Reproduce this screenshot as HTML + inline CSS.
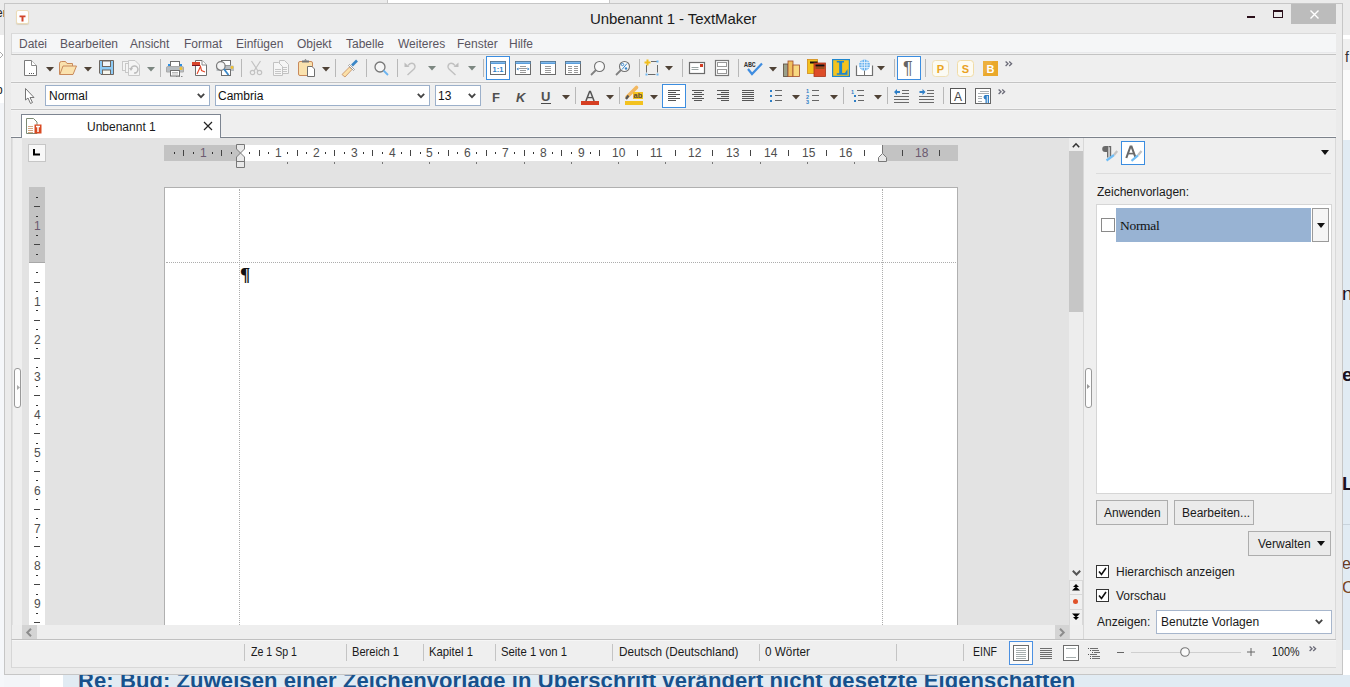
<!DOCTYPE html><html><head><meta charset="utf-8"><style>
*{margin:0;padding:0;box-sizing:border-box}
html,body{width:1350px;height:687px;overflow:hidden;background:#fff;position:relative;font-family:"Liberation Sans",sans-serif;font-size:12px;color:#1e1e1e}
div,svg{position:absolute}
svg{overflow:visible}
.t{white-space:nowrap;line-height:1}
</style></head><body><div style="left:0px;top:0px;width:1350px;height:687px;background:#f3f5f8"></div>
<div style="left:0px;top:0px;width:1350px;height:35px;background:#ebebeb"></div>
<div style="left:387px;top:0px;width:223px;height:3px;background:#fff;border-left:1px solid #c8c8c8;border-right:1px solid #c8c8c8"></div>
<div style="left:1343px;top:35px;width:7px;height:4px;background:#fff"></div>
<div style="left:1343px;top:39px;width:7px;height:31px;background:#f0f0f0"></div>
<div class="t" style="left:1345px;top:50px;font-size:14px;color:#333">f</div>
<div style="left:1343px;top:70px;width:7px;height:70px;background:#fbfbfb"></div>
<div style="left:1343px;top:140px;width:7px;height:510px;background:#e1ebf3"></div>
<div class="t" style="left:1342px;top:284px;color:#1a1020;font-size:19px">n</div>
<div class="t" style="left:1342px;top:365px;color:#1a1020;font-size:19px;font-weight:bold">e</div>
<div class="t" style="left:1342px;top:474px;color:#1a1020;font-size:19px;font-weight:bold">L</div>
<div class="t" style="left:1342px;top:556px;color:#6a3a20;font-size:16px">e</div>
<div class="t" style="left:1342px;top:579px;color:#7a4420;font-size:17px">C</div>
<div style="left:1343px;top:524px;width:7px;height:1px;background:#c9d3dc"></div>
<div style="left:1343px;top:650px;width:7px;height:37px;background:#fff"></div>
<div style="left:0px;top:35px;width:4px;height:68px;background:#fff"></div>
<div class="t" style="left:-4px;top:7px;font-size:12px;color:#222">er</div>
<svg style="left:0px;top:52px;" width="4" height="6" viewBox="0 0 4 6"><path d="M0 0L3 3L0 6" fill="none" stroke="#aaa"/></svg>
<div class="t" style="left:-4px;top:84px;font-size:12px;color:#222">p</div>
<div style="left:0px;top:110px;width:4px;height:577px;background:#f5f7fa"></div>
<div style="left:40px;top:674px;width:23px;height:13px;background:#fff"></div>
<div style="left:63px;top:675px;width:1287px;height:12px;background:#e1ebf3"></div>
<div class="t" style="left:78px;top:670px;font-size:22px;font-weight:bold;color:#17518c;letter-spacing:0.09px">Re: Bug: Zuweisen einer Zeichenvorlage in Überschrift verändert nicht gesetzte Eigenschaften</div>
<div style="left:4px;top:3px;width:1339px;height:672px;background:#ebebeb;border:1px solid #c6c6c6"></div>
<div class="t" style="left:590px;top:11px;font-size:15px;color:#1a1a1a;letter-spacing:-0.08px">Unbenannt 1 - TextMaker</div>
<div style="left:16px;top:10px;width:13px;height:14px;background:#fefefe;border:1px solid #ecdcb8;border-radius:2px;box-shadow:0 1px 1px #d8d0c0"></div>
<svg style="left:19px;top:15px;" width="7" height="7" viewBox="0 0 7 7"><path d="M0.5 0.5H6.5V2.3H4.5V6.5H2.5V2.3H0.5Z" fill="#d2452a"/></svg>
<div style="left:1247px;top:16px;width:8px;height:2px;background:#2a0f1a"></div>
<div style="left:1273px;top:10px;width:10px;height:8px;border:1px solid #2a0f1a;border-top-width:2px"></div>
<div style="left:1291px;top:4px;width:45px;height:20px;background:#bcbcbc"></div>
<svg style="left:1310px;top:10px;" width="9" height="9" viewBox="0 0 9 9"><path d="M0.5 0.5L8.5 8.5M8.5 0.5L0.5 8.5" stroke="#fff" stroke-width="1.4"/></svg>
<div style="left:11px;top:33px;width:1325px;height:22px;background:#f5f6f7;border-top:1px solid #dadada;border-left:1px solid #d8d8d8;border-bottom:1px solid #c3c3c3"></div>
<div style="left:12px;top:52px;width:1324px;height:1px;background:#e8e9eb"></div>
<div style="left:12px;top:53px;width:1324px;height:1px;background:#f1f1f1"></div>
<div class="t" style="left:19px;top:38px;font-size:12px;color:#5a5560">Datei</div>
<div class="t" style="left:60px;top:38px;font-size:12px;color:#5a5560">Bearbeiten</div>
<div class="t" style="left:130px;top:38px;font-size:12px;color:#5a5560">Ansicht</div>
<div class="t" style="left:184px;top:38px;font-size:12px;color:#5a5560">Format</div>
<div class="t" style="left:236px;top:38px;font-size:12px;color:#5a5560">Einfügen</div>
<div class="t" style="left:297px;top:38px;font-size:12px;color:#5a5560">Objekt</div>
<div class="t" style="left:346px;top:38px;font-size:12px;color:#5a5560">Tabelle</div>
<div class="t" style="left:398px;top:38px;font-size:12px;color:#5a5560">Weiteres</div>
<div class="t" style="left:457px;top:38px;font-size:12px;color:#5a5560">Fenster</div>
<div class="t" style="left:509px;top:38px;font-size:12px;color:#5a5560">Hilfe</div>
<div style="left:11px;top:55px;width:1325px;height:28px;background:#efefef;border-bottom:1px solid #c4c4c4"></div>
<div style="left:11px;top:81px;width:1325px;height:1px;background:#f3f3f3"></div>
<div style="left:11px;top:83px;width:1325px;height:1px;background:#f3f3f3"></div>
<svg style="left:24px;top:60px;" width="13" height="16" viewBox="0 0 13 16"><path d="M0.5 0.5H7.5L12.5 5.5V15.5H0.5Z" fill="#fff" stroke="#7a7a7a"/><path d="M7.5 0.5V5.5H12.5" fill="#fff" stroke="#8a8a8a"/><path d="M5 13.5h1M7 13.5h1M9 13.5h1" stroke="#555" stroke-width="1"/></svg>
<svg style="left:46px;top:67px;" width="8" height="5" viewBox="0 0 8 5"><path d="M0 0H8L4 4.5Z" fill="#4f4236"/></svg>
<svg style="left:59px;top:61px;" width="18" height="14" viewBox="0 0 18 14"><path d="M0.5 13V2.5Q0.5 0.5 2.5 0.5H6.5L8 2.5H13.5V5" fill="#fae2ae" stroke="#c98a5c"/><path d="M0.5 2.5V13.5H14L17.5 5H4L1 13" fill="#fae2ae" stroke="#c98a5c"/></svg>
<svg style="left:84px;top:67px;" width="8" height="5" viewBox="0 0 8 5"><path d="M0 0H8L4 4.5Z" fill="#4f4236"/></svg>
<svg style="left:99px;top:60px;" width="15" height="15" viewBox="0 0 15 15"><path d="M0.5 0.5H14.5V14.5H2L0.5 13Z" fill="#8ecbf6" stroke="#6e6660"/><rect x="3.5" y="1" width="8" height="5.5" fill="#f4f6f8" stroke="#6e6660"/><rect x="3.5" y="10" width="8" height="4.5" fill="#f6f6ee" stroke="#6e6660"/></svg>
<svg style="left:122px;top:60px;" width="18" height="16" viewBox="0 0 18 16"><g fill="#f4f4f4" stroke="#c8c8c8"><rect x="0.5" y="1.5" width="7" height="9"/><rect x="3.5" y="3.5" width="7" height="9"/><path d="M6.5 0.5H13L17.5 5V15.5H6.5Z"/></g><path d="M9 9a3.5 3.5 0 1 1 3 4" fill="none" stroke="#bbb" stroke-width="1.5"/><path d="M7 8h4l-2 3z" fill="#bbb"/></svg>
<svg style="left:147px;top:67px;" width="8" height="5" viewBox="0 0 8 5"><path d="M0 0H8L4 4.5Z" fill="#7b8680"/></svg>
<div style="left:160px;top:59px;width:1px;height:18px;background:#b8b8b8"></div>
<svg style="left:166px;top:61px;" width="18" height="16" viewBox="0 0 18 16"><rect x="4.5" y="0.5" width="9" height="5" fill="#fff" stroke="#6f6f6f"/><rect x="2" y="3" width="2" height="2" fill="#2f8fe0"/><rect x="14" y="3" width="2" height="2" fill="#2f8fe0"/><path d="M1.5 5.5H16.5Q17.5 5.5 17.5 7V11H0.5V7Q0.5 5.5 1.5 5.5Z" fill="#b8bdc1" stroke="#aaa"/><rect x="4.5" y="9.5" width="9" height="5.5" fill="#fff" stroke="#6f6f6f"/><path d="M6 11.5h6M6 13h6" stroke="#bbb"/><circle cx="15" cy="7.5" r="1.5" fill="#f2c22e"/><path d="M10 15.5h1.5M12.5 15.5h1.5M15 15.5h1.5" stroke="#888" stroke-width="1"/></svg>
<svg style="left:192px;top:60px;" width="15" height="16" viewBox="0 0 15 16"><path d="M3.5 0.5H10L14.5 5V15.5H3.5Z" fill="#fff" stroke="#6f6f6f"/><path d="M10 0.5V5H14.5" fill="#fff" stroke="#888"/><rect x="0" y="2" width="8" height="4" fill="#d8452b"/><rect x="0" y="5" width="8" height="1" fill="#7a1420"/><path d="M5 14L8.5 6.5L9.5 10.5L13 12" fill="none" stroke="#e2482a" stroke-width="1.1"/></svg>
<svg style="left:216px;top:60px;" width="19" height="17" viewBox="0 0 19 17"><rect x="5.5" y="0.5" width="9" height="5" fill="#fff" stroke="#6f6f6f"/><path d="M1.5 5.5H17Q18 5.5 18 7V11H0.5V7Z" fill="#b8bdc1"/><rect x="5.5" y="9.5" width="9" height="6" fill="#fff" stroke="#6f6f6f"/><circle cx="16" cy="7.5" r="1.4" fill="#f2c22e"/><circle cx="4.8" cy="6" r="4.3" fill="#f4f4f4" stroke="#7a7a7a" stroke-width="1.2"/><path d="M8 9L12.5 15" stroke="#3a88c8" stroke-width="1.8"/></svg>
<div style="left:241px;top:59px;width:1px;height:18px;background:#b8b8b8"></div>
<svg style="left:249px;top:60px;" width="14" height="16" viewBox="0 0 14 16"><g fill="none" stroke="#c2c2c2" stroke-width="1.2"><path d="M2.5 1L9 11M11.5 1L5 11"/><circle cx="3.5" cy="12.5" r="2.2"/><circle cx="10.5" cy="12.5" r="2.2"/></g></svg>
<svg style="left:273px;top:60px;" width="16" height="16" viewBox="0 0 16 16"><g fill="#f6f6f6" stroke="#c2c2c2"><path d="M6.5 0.5H11.5L15.5 4.5V13.5H6.5Z"/><path d="M0.5 2.5H5.5L9.5 6.5V15.5H0.5Z"/></g><path d="M2 9.5h6M2 11.5h6M2 13.5h6M10 7.5h4M10 9.5h4M10 11.5h4" stroke="#c6c6c6"/></svg>
<svg style="left:298px;top:59px;" width="18" height="18" viewBox="0 0 18 18"><rect x="0.5" y="2.5" width="14" height="14" rx="1.5" fill="#fae2ae" stroke="#c98a5c"/><rect x="4" y="1.5" width="7" height="2" fill="#777"/><path d="M7.5 0L9 1.5H6Z" fill="#777"/><path d="M9.5 7.5H14L16.5 10V17.5H9.5Z" fill="#fff" stroke="#6f6f6f"/></svg>
<svg style="left:322px;top:67px;" width="8" height="5" viewBox="0 0 8 5"><path d="M0 0H8L4 4.5Z" fill="#4f4236"/></svg>
<div style="left:335px;top:59px;width:1px;height:18px;background:#b8b8b8"></div>
<svg style="left:341px;top:60px;" width="17" height="17" viewBox="0 0 17 17"><path d="M8.5 7L1 14.5L4 17L11 9.5Z" fill="#fbe0a8" stroke="#c48a60" stroke-width="0.8"/><path d="M7.5 5.5L12.5 10.5L13.5 9.5L8.5 4.5Z" fill="#fff" stroke="#8a8a8a" stroke-width="0.8"/><path d="M11 5.5L16 0.5" stroke="#3a86c6" stroke-width="2.6"/></svg>
<div style="left:366px;top:59px;width:1px;height:18px;background:#b8b8b8"></div>
<svg style="left:374px;top:61px;" width="15" height="15" viewBox="0 0 15 15"><circle cx="6" cy="6" r="5" fill="#f6f6f6" stroke="#777" stroke-width="1.3"/><path d="M9.5 9.5L14 14" stroke="#6cb4f0" stroke-width="1.8"/></svg>
<div style="left:397px;top:59px;width:1px;height:18px;background:#b8b8b8"></div>
<svg style="left:404px;top:60px;" width="14" height="16" viewBox="0 0 14 16"><path d="M4 5.5Q7 2 10 4Q12 6.5 10 9L3.5 15" fill="none" stroke="#c0c0c0" stroke-width="1.4"/><path d="M0.5 2.5V7H5.5Z" fill="#bdbdbd"/></svg>
<svg style="left:428px;top:66px;" width="8" height="5" viewBox="0 0 8 5"><path d="M0 0H8L4 4.5Z" fill="#7b8680"/></svg>
<svg style="left:445px;top:60px;" width="14" height="16" viewBox="0 0 14 16"><path d="M10 5.5Q7 2 4 4Q2 6.5 4 9L10.5 15" fill="none" stroke="#c0c0c0" stroke-width="1.4"/><path d="M13.5 2.5V7H8.5Z" fill="#bdbdbd"/></svg>
<svg style="left:468px;top:66px;" width="8" height="5" viewBox="0 0 8 5"><path d="M0 0H8L4 4.5Z" fill="#7b8680"/></svg>
<div style="left:483px;top:59px;width:1px;height:18px;background:#b8b8b8"></div>
<div style="left:486px;top:56px;width:24px;height:24px;background:#fff;border:1px solid #3b8de0"></div>
<svg style="left:490px;top:61px;" width="16" height="14" viewBox="0 0 16 14"><rect x="0.5" y="0.5" width="15" height="13" fill="#fff" stroke="#6b6b6b"/><rect x="0.5" y="0.5" width="15" height="2.5" fill="#4d95d6"/><path d="M1 1.7H15" stroke="#9fcdf5" stroke-width="0.8"/><text x="8" y="11.2" font-size="7.5" font-weight="bold" text-anchor="middle" fill="#2f7fc6" font-family="Liberation Sans">1:1</text></svg>
<svg style="left:515px;top:61px;" width="16" height="14" viewBox="0 0 16 14"><rect x="0.5" y="0.5" width="15" height="13" fill="#fff" stroke="#6b6b6b"/><rect x="0.5" y="0.5" width="15" height="2.5" fill="#4d95d6"/><path d="M1 1.7H15" stroke="#9fcdf5" stroke-width="0.8"/><path d="M5 5.5h6M4 7.5h8M5 9.5h6M5 11.5h6" stroke="#999"/><path d="M1.5 8L3.5 6.5V9.5Z M14.5 8L12.5 6.5V9.5Z" fill="#2f7fc6"/></svg>
<svg style="left:540px;top:61px;" width="16" height="14" viewBox="0 0 16 14"><rect x="0.5" y="0.5" width="15" height="13" fill="#fff" stroke="#6b6b6b"/><rect x="0.5" y="0.5" width="15" height="2.5" fill="#4d95d6"/><path d="M1 1.7H15" stroke="#9fcdf5" stroke-width="0.8"/><path d="M5 5.5h6M5 7.5h6M5 9.5h6M5 11.5h6" stroke="#999"/></svg>
<svg style="left:565px;top:61px;" width="16" height="14" viewBox="0 0 16 14"><rect x="0.5" y="0.5" width="15" height="13" fill="#fff" stroke="#6b6b6b"/><rect x="0.5" y="0.5" width="15" height="2.5" fill="#4d95d6"/><path d="M1 1.7H15" stroke="#9fcdf5" stroke-width="0.8"/><path d="M3 5.5h4M9 5.5h4M3 7.5h4M9 7.5h4M3 9.5h4M9 9.5h4M3 11.5h4M9 11.5h4" stroke="#999"/></svg>
<svg style="left:590px;top:61px;" width="15" height="15" viewBox="0 0 15 15"><circle cx="9.5" cy="5.5" r="5" fill="#f8f8f8" stroke="#707070" stroke-width="1.1"/><path d="M6 9L1 14" stroke="#808080" stroke-width="1.8"/></svg>
<svg style="left:615px;top:61px;" width="15" height="15" viewBox="0 0 15 15"><circle cx="9.5" cy="5.5" r="5" fill="#f8f8f8" stroke="#707070" stroke-width="1.1"/><path d="M6 9L1 14" stroke="#808080" stroke-width="1.8"/><path d="M12 2.5L7 8.5" stroke="#3a88cc"/><circle cx="7.5" cy="3.5" r="1.2" fill="none" stroke="#3a88cc"/><circle cx="11" cy="7.5" r="1.2" fill="#3a88cc"/></svg>
<div style="left:639px;top:59px;width:1px;height:18px;background:#b8b8b8"></div>
<svg style="left:644px;top:59px;" width="18" height="18" viewBox="0 0 18 18"><path d="M2.5 6V13.5M4 15.5H11.5M13.5 6V13.5M7 2.5H13" stroke="#6b6b6b" fill="none"/><rect x="1.5" y="14.5" width="2" height="2" fill="#6cb8f4"/><rect x="12.5" y="14.5" width="2" height="2" fill="#6cb8f4"/><rect x="12.5" y="1.5" width="2" height="2" fill="#6cb8f4"/><path d="M3.5 0.5V6.5M0.5 3.5H6.5" stroke="#f1be1c" stroke-width="2"/></svg>
<svg style="left:665px;top:66px;" width="8" height="5" viewBox="0 0 8 5"><path d="M0 0H8L4 4.5Z" fill="#4f4236"/></svg>
<div style="left:682px;top:59px;width:1px;height:18px;background:#b8b8b8"></div>
<svg style="left:689px;top:62px;" width="16" height="12" viewBox="0 0 16 12"><rect x="0.5" y="0.5" width="15" height="11" fill="#fff" stroke="#6b6b6b" stroke-width="1.2"/><rect x="11" y="2" width="3" height="3" fill="#d23b22"/><path d="M2.5 5.5h7M2.5 7.5h7" stroke="#9aa4a4"/></svg>
<svg style="left:715px;top:60px;" width="14" height="16" viewBox="0 0 14 16"><rect x="0.5" y="0.5" width="13" height="15" fill="#fff" stroke="#777" stroke-width="1.2"/><rect x="2.5" y="2.5" width="9" height="4" fill="none" stroke="#999"/><rect x="2.5" y="9.5" width="9" height="4" fill="none" stroke="#999"/></svg>
<div style="left:738px;top:59px;width:1px;height:18px;background:#b8b8b8"></div>
<svg style="left:744px;top:60px;" width="19" height="16" viewBox="0 0 19 16"><text x="0" y="7" font-size="6.5" font-weight="bold" fill="#333" font-family="Liberation Mono">ABC</text><path d="M4 9L8 14L18 3.5" fill="none" stroke="#3f8de0" stroke-width="2.2"/></svg>
<svg style="left:769px;top:67px;" width="8" height="5" viewBox="0 0 8 5"><path d="M0 0H8L4 4.5Z" fill="#4f4236"/></svg>
<svg style="left:783px;top:60px;" width="17" height="17" viewBox="0 0 17 17"><rect x="0.5" y="4" width="4.5" height="12.5" fill="#9aa08a" stroke="#5a4a3a" stroke-width="0.8"/><rect x="5" y="1" width="5" height="15.5" fill="#f0c060" stroke="#a04a2a" stroke-width="0.8"/><rect x="10" y="5" width="6.5" height="11.5" fill="#f8d880" stroke="#a04a2a" stroke-width="0.8"/></svg>
<svg style="left:807px;top:59px;" width="19" height="18" viewBox="0 0 19 18"><rect x="0.5" y="0.5" width="10" height="14" fill="#f3c21f" stroke="#d38a1a" stroke-width="0.8"/><rect x="3" y="2.5" width="7.5" height="2" fill="#111"/><rect x="7" y="4" width="11.5" height="13.5" fill="#dd4c28" stroke="#a83418" stroke-width="0.8"/><rect x="8.5" y="5.5" width="9" height="2" fill="#111"/><rect x="8.5" y="8.5" width="9" height="1" fill="#551"/></svg>
<svg style="left:832px;top:59px;" width="18" height="18" viewBox="0 0 18 18"><rect x="0.6" y="0.6" width="16.8" height="16.8" fill="#f3c31e" stroke="#1e86cd" stroke-width="1.2"/><path d="M4.8 2H12V3.4H10.1V14H13L15.5 10V15.7H4.8V14.3H7.2V3.4H4.8Z" fill="#1e86cd"/></svg>
<svg style="left:856px;top:59px;" width="17" height="18" viewBox="0 0 17 18"><path d="M0.5 6.5V16.5H16.5V6.5" fill="#fff" stroke="#707070" stroke-width="1.2"/><path d="M8.5 10V16.5" stroke="#707070"/><circle cx="8.5" cy="6" r="5.5" fill="#6ab2ee"/><path d="M3 3.5h11M3 6h11M3 8.5h11M6 0.5v11M8.5 0.5v11M11 0.5v11" stroke="#eaf4fc" stroke-width="0.8"/></svg>
<svg style="left:877px;top:66px;" width="8" height="5" viewBox="0 0 8 5"><path d="M0 0H8L4 4.5Z" fill="#4f4236"/></svg>
<div style="left:894px;top:59px;width:1px;height:18px;background:#b8b8b8"></div>
<div style="left:897px;top:56px;width:24px;height:24px;background:#fff;border:1px solid #3b8de0"></div>
<div class="t" style="left:903px;top:59px;font-size:18px;color:#666">¶</div>
<div style="left:925px;top:59px;width:1px;height:18px;background:#b8b8b8"></div>
<svg style="left:932px;top:60px;" width="17" height="17" viewBox="0 0 17 17"><rect x="0.5" y="0.5" width="16" height="16" rx="3" fill="#fbfbf4" stroke="#efe0b8"/><text x="8.5" y="12.5" font-size="11" font-weight="bold" text-anchor="middle" fill="#eaa420" font-family="Liberation Sans">P</text></svg>
<svg style="left:957px;top:60px;" width="17" height="17" viewBox="0 0 17 17"><rect x="0.5" y="0.5" width="16" height="16" rx="3" fill="#fdfbf2" stroke="#f1dca6"/><text x="8.5" y="12.5" font-size="11" font-weight="bold" text-anchor="middle" fill="#e9a11f" font-family="Liberation Sans">S</text></svg>
<svg style="left:983px;top:61px;" width="15" height="15" viewBox="0 0 15 15"><rect x="0" y="0" width="15" height="15" fill="#eaa82a"/><path d="M0 0H10L0 15Z" fill="#f0b850" opacity="0.5"/><text x="7.5" y="11.5" font-size="11" font-weight="bold" text-anchor="middle" fill="#fff" font-family="Liberation Sans">B</text></svg>
<svg style="left:1005px;top:61px;" width="8" height="6" viewBox="0 0 8 6"><path d="M0.6 0.6L3 2.8L0.6 5M4.2 0.6L6.6 2.8L4.2 5" fill="none" stroke="#6b6b78" stroke-width="1.3"/></svg>
<div style="left:11px;top:84px;width:1325px;height:26px;background:#efefef;border-bottom:1px solid #c4c4c4"></div>
<div style="left:11px;top:108px;width:1325px;height:1px;background:#f3f3f3"></div>
<div style="left:11px;top:110px;width:1325px;height:1px;background:#f3f3f3"></div>
<svg style="left:25px;top:88px;" width="10" height="16" viewBox="0 0 10 16"><path d="M0.5 0.5V12L3 10L5.5 15.5L7.5 14.5L5 9.5H9Z" fill="#fff" stroke="#767676"/></svg>
<div style="left:45px;top:85px;width:165px;height:21px;background:#fff;border:1px solid #9cb0ca"></div>
<div class="t" style="left:49px;top:90px;font-size:12px;color:#111;transform:scaleX(0.9968);transform-origin:0 0">Normal</div>
<svg style="left:197px;top:93px;" width="8" height="6" viewBox="0 0 8 6"><path d="M0.8 0.8L4 4.2L7.2 0.8" fill="none" stroke="#444" stroke-width="1.8"/></svg>
<div style="left:215px;top:85px;width:215px;height:21px;background:#fff;border:1px solid #9cb0ca"></div>
<div class="t" style="left:218px;top:90px;font-size:12px;color:#111">Cambria</div>
<svg style="left:417px;top:93px;" width="8" height="6" viewBox="0 0 8 6"><path d="M0.8 0.8L4 4.2L7.2 0.8" fill="none" stroke="#444" stroke-width="1.8"/></svg>
<div style="left:435px;top:85px;width:46px;height:21px;background:#fff;border:1px solid #9cb0ca"></div>
<div class="t" style="left:438px;top:90px;font-size:12px;color:#111">13</div>
<svg style="left:468px;top:93px;" width="8" height="6" viewBox="0 0 8 6"><path d="M0.8 0.8L4 4.2L7.2 0.8" fill="none" stroke="#444" stroke-width="1.8"/></svg>
<div class="t" style="left:492px;top:91px;font-size:13px;font-weight:bold;color:#505050">F</div>
<div class="t" style="left:516px;top:91px;font-size:13px;font-weight:bold;font-style:italic;color:#505050">K</div>
<div class="t" style="left:541px;top:90px;font-size:13px;font-weight:bold;color:#505050">U</div>
<div style="left:541px;top:103px;width:10px;height:1px;background:#4a4a4a"></div>
<svg style="left:562px;top:95px;" width="8" height="5" viewBox="0 0 8 5"><path d="M0 0H8L4 4.5Z" fill="#4f4236"/></svg>
<div style="left:575px;top:87px;width:1px;height:17px;background:#b8b8b8"></div>
<svg style="left:585px;top:91px;" width="10" height="10" viewBox="0 0 10 10"><path d="M0.9 10L4.6 0.6H5.4L9.1 10" fill="none" stroke="#555" stroke-width="1.5"/><path d="M2.6 6.6H7.4" stroke="#555" stroke-width="1.3"/></svg>
<div style="left:581px;top:101px;width:18px;height:4px;background:#d63f22"></div>
<svg style="left:606px;top:95px;" width="8" height="5" viewBox="0 0 8 5"><path d="M0 0H8L4 4.5Z" fill="#4f4236"/></svg>
<div style="left:619px;top:87px;width:1px;height:17px;background:#b8b8b8"></div>
<svg style="left:625px;top:86px;" width="19" height="20" viewBox="0 0 19 20"><path d="M11.5 1.5L2 11" stroke="#f2b860" stroke-width="3.6" stroke-linecap="round"/><path d="M3.5 9.5L1 13" stroke="#555" stroke-width="2.2"/><rect x="8" y="6" width="10" height="7" fill="#f3c21f"/><text x="8.6" y="12" font-size="7.5" font-weight="bold" fill="#5a4a3a" font-family="Liberation Sans">ab</text><rect x="0" y="15" width="18" height="4" fill="#f3c21f"/></svg>
<svg style="left:650px;top:95px;" width="8" height="5" viewBox="0 0 8 5"><path d="M0 0H8L4 4.5Z" fill="#4f4236"/></svg>
<div style="left:662px;top:84px;width:24px;height:24px;background:#fff;border:1px solid #3b8de0"></div>
<svg style="left:667px;top:89px;" width="16" height="14" viewBox="0 0 16 14"><path d="M1 1.5h12M1 3.5h8M1 5.5h12M1 7.5h8M1 9.5h12M1 11.5h8" stroke="#555" stroke-width="1"/></svg>
<svg style="left:692px;top:89px;" width="16" height="14" viewBox="0 0 16 14"><path d="M0 1.5h12M2 3.5h8M0 5.5h12M2 7.5h8M0 9.5h12M2 11.5h8" stroke="#555" stroke-width="1"/></svg>
<svg style="left:717px;top:89px;" width="16" height="14" viewBox="0 0 16 14"><path d="M0 1.5h12M4 3.5h8M0 5.5h12M4 7.5h8M0 9.5h12M4 11.5h8" stroke="#555" stroke-width="1"/></svg>
<svg style="left:742px;top:89px;" width="16" height="14" viewBox="0 0 16 14"><path d="M0 1.5h12M0 3.5h12M0 5.5h12M0 7.5h12M0 9.5h12M0 11.5h12" stroke="#555" stroke-width="1"/></svg>
<svg style="left:770px;top:89px;" width="13" height="14" viewBox="0 0 13 14"><g fill="#2f7fc6"><rect x="0" y="1" width="2" height="2"/><rect x="0" y="6" width="2" height="2"/><rect x="0" y="11" width="2" height="2"/></g><path d="M5 1.5h7M5 6.5h7M5 11.5h7" stroke="#666"/></svg>
<svg style="left:792px;top:95px;" width="8" height="5" viewBox="0 0 8 5"><path d="M0 0H8L4 4.5Z" fill="#4f4236"/></svg>
<svg style="left:806px;top:88px;" width="14" height="16" viewBox="0 0 14 16"><text x="0" y="5" font-size="5.5" font-weight="bold" fill="#2f7fc6" font-family="Liberation Sans">1</text><text x="0" y="10.5" font-size="5.5" font-weight="bold" fill="#2f7fc6" font-family="Liberation Sans">2</text><text x="0" y="16" font-size="5.5" font-weight="bold" fill="#2f7fc6" font-family="Liberation Sans">3</text><path d="M6 2.5h7M6 7.5h7M6 12.5h7" stroke="#666"/></svg>
<svg style="left:830px;top:95px;" width="8" height="5" viewBox="0 0 8 5"><path d="M0 0H8L4 4.5Z" fill="#4f4236"/></svg>
<div style="left:843px;top:87px;width:1px;height:17px;background:#b8b8b8"></div>
<svg style="left:851px;top:88px;" width="13" height="16" viewBox="0 0 13 16"><text x="0" y="6" font-size="5.5" font-weight="bold" fill="#2f7fc6" font-family="Liberation Sans">1</text><rect x="3" y="7" width="2" height="2" fill="#2f7fc6"/><rect x="3" y="12" width="2" height="2" fill="#2f7fc6"/><path d="M6 2.5h7M7 7.5h6M7 12.5h6" stroke="#666"/></svg>
<svg style="left:874px;top:95px;" width="8" height="5" viewBox="0 0 8 5"><path d="M0 0H8L4 4.5Z" fill="#4f4236"/></svg>
<div style="left:887px;top:87px;width:1px;height:17px;background:#b8b8b8"></div>
<svg style="left:894px;top:89px;" width="16" height="15" viewBox="0 0 16 15"><path d="M8 1.5h7M8 4.5h7M0 7.5h15M0 10.5h15M0 13.5h15" stroke="#6a6a6a"/><path d="M0 3L3 0V2H6V4H3V6Z" fill="#2f7fc6"/></svg>
<svg style="left:919px;top:89px;" width="16" height="15" viewBox="0 0 16 15"><path d="M8 1.5h7M8 4.5h7M0 7.5h15M0 10.5h15M0 13.5h15" stroke="#6a6a6a"/><path d="M6.5 3L3.5 0V2H0.5V4H3.5V6Z" fill="#2f7fc6"/></svg>
<div style="left:943px;top:87px;width:1px;height:17px;background:#b8b8b8"></div>
<svg style="left:950px;top:88px;" width="16" height="16" viewBox="0 0 16 16"><rect x="0.5" y="0.5" width="15" height="15" fill="#fff" stroke="#555"/><text x="8" y="13" font-size="12" text-anchor="middle" fill="#444" font-family="Liberation Sans">A</text></svg>
<svg style="left:975px;top:88px;" width="16" height="16" viewBox="0 0 16 16"><rect x="0.5" y="0.5" width="15" height="15" fill="#fff" stroke="#666"/><path d="M5 3.5h9M3 5.5h11M3 8.5h4M3 10.5h4M3 13.5h4" stroke="#aab0b4"/><path d="M10 7h4v8h-1.3v-7h-0.9v7h-1.3v-3.6a2.3 2.3 0 0 1 -0.5-4.4z" fill="#2f7fc6"/></svg>
<svg style="left:998px;top:89px;" width="8" height="6" viewBox="0 0 8 6"><path d="M0.6 0.6L3 2.8L0.6 5M4.2 0.6L6.6 2.8L4.2 5" fill="none" stroke="#6b6b78" stroke-width="1.3"/></svg>
<div style="left:11px;top:111px;width:1325px;height:26px;background:#efefef"></div>
<div style="left:11px;top:136px;width:1325px;height:1px;background:#f8f8f8"></div>
<div style="left:11px;top:137px;width:1325px;height:1px;background:#7c828b"></div>
<div style="left:21px;top:114px;width:200px;height:24px;background:#fff;border:1px solid #7d8591;border-bottom:none"></div>
<svg style="left:26px;top:118px;" width="17" height="16" viewBox="0 0 17 16"><path d="M0.5 0.5H7.5L11 4V15.5H0.5Z" fill="#fff" stroke="#7c8a74"/><path d="M2 8.5h5M2 10.5h5M2 12.5h5M2 14.5h5" stroke="#d4a884"/><rect x="8.5" y="6.5" width="7" height="9" fill="#d94a22"/><path d="M10 8.5H14M12 8.5V14" stroke="#fff" stroke-width="1.5"/></svg>
<div class="t" style="left:87px;top:121px;font-size:12px;color:#1a1a1a">Unbenannt 1</div>
<svg style="left:203px;top:121px;" width="10" height="10" viewBox="0 0 10 10"><path d="M1 1L9 9M9 1L1 9" stroke="#222" stroke-width="1.2"/></svg>
<div style="left:11px;top:138px;width:1072px;height:502px;background:#e3e3e3"></div>
<div style="left:11px;top:138px;width:11px;height:501px;background:#efefef;border-left:1px solid #d6d6d6"></div>
<div style="left:12px;top:138px;width:1px;height:501px;background:#e0e0e0"></div>
<div style="left:14px;top:368px;width:7px;height:40px;background:#fdfdfd;border:1px solid #999;border-radius:3px"></div>
<svg style="left:17px;top:385px;" width="3" height="5" viewBox="0 0 3 5"><path d="M0 0L3 2.5L0 5Z" fill="#aaa"/></svg>
<div style="left:164px;top:187px;width:794px;height:438px;background:#fff;border-left:1px solid #b0b0b0;border-right:1px solid #b0b0b0;border-top:1px solid #b0b0b0"></div>
<div style="left:239px;top:189px;width:0px;height:436px;border-left:1px dotted #adadad"></div>
<div style="left:166px;top:262px;width:790px;height:0px;border-top:1px dotted #adadad"></div>
<div style="left:882px;top:189px;width:0px;height:436px;border-left:1px dotted #adadad"></div>
<div class="t" style="left:240px;top:265px;font-family:'Liberation Serif',serif;font-size:19px;font-weight:bold;color:#111">¶</div>
<div style="left:164px;top:145px;width:794px;height:16px;background:#fff"></div>
<div style="left:164px;top:145px;width:76px;height:16px;background:#c3c3c3"></div>
<div style="left:883px;top:145px;width:75px;height:16px;background:#c3c3c3"></div>
<div style="left:174px;top:152px;width:1px;height:2px;background:#333"></div>
<div style="left:183px;top:150px;width:1px;height:6px;background:#444"></div>
<div style="left:193px;top:152px;width:1px;height:2px;background:#333"></div>
<div class="t" style="left:200px;top:147px;font-size:12px;color:#6b5a70;width:6px;text-align:center">1</div>
<div style="left:212px;top:152px;width:1px;height:2px;background:#333"></div>
<div style="left:221px;top:150px;width:1px;height:6px;background:#444"></div>
<div style="left:231px;top:152px;width:1px;height:2px;background:#333"></div>
<div style="left:249px;top:152px;width:1px;height:2px;background:#333"></div>
<div style="left:259px;top:150px;width:1px;height:6px;background:#444"></div>
<div style="left:268px;top:152px;width:1px;height:2px;background:#333"></div>
<div class="t" style="left:275px;top:147px;font-size:12px;color:#4e4e4e;width:6px;text-align:center">1</div>
<div style="left:287px;top:152px;width:1px;height:2px;background:#333"></div>
<div style="left:297px;top:150px;width:1px;height:6px;background:#444"></div>
<div style="left:306px;top:152px;width:1px;height:2px;background:#333"></div>
<div class="t" style="left:313px;top:147px;font-size:12px;color:#4e4e4e;width:6px;text-align:center">2</div>
<div style="left:325px;top:152px;width:1px;height:2px;background:#333"></div>
<div style="left:334px;top:150px;width:1px;height:6px;background:#444"></div>
<div style="left:344px;top:152px;width:1px;height:2px;background:#333"></div>
<div class="t" style="left:351px;top:147px;font-size:12px;color:#4e4e4e;width:6px;text-align:center">3</div>
<div style="left:363px;top:152px;width:1px;height:2px;background:#333"></div>
<div style="left:372px;top:150px;width:1px;height:6px;background:#444"></div>
<div style="left:382px;top:152px;width:1px;height:2px;background:#333"></div>
<div class="t" style="left:389px;top:147px;font-size:12px;color:#4e4e4e;width:6px;text-align:center">4</div>
<div style="left:401px;top:152px;width:1px;height:2px;background:#333"></div>
<div style="left:410px;top:150px;width:1px;height:6px;background:#444"></div>
<div style="left:420px;top:152px;width:1px;height:2px;background:#333"></div>
<div class="t" style="left:426px;top:147px;font-size:12px;color:#4e4e4e;width:6px;text-align:center">5</div>
<div style="left:438px;top:152px;width:1px;height:2px;background:#333"></div>
<div style="left:448px;top:150px;width:1px;height:6px;background:#444"></div>
<div style="left:457px;top:152px;width:1px;height:2px;background:#333"></div>
<div class="t" style="left:464px;top:147px;font-size:12px;color:#4e4e4e;width:6px;text-align:center">6</div>
<div style="left:476px;top:152px;width:1px;height:2px;background:#333"></div>
<div style="left:486px;top:150px;width:1px;height:6px;background:#444"></div>
<div style="left:495px;top:152px;width:1px;height:2px;background:#333"></div>
<div class="t" style="left:502px;top:147px;font-size:12px;color:#4e4e4e;width:6px;text-align:center">7</div>
<div style="left:514px;top:152px;width:1px;height:2px;background:#333"></div>
<div style="left:524px;top:150px;width:1px;height:6px;background:#444"></div>
<div style="left:533px;top:152px;width:1px;height:2px;background:#333"></div>
<div class="t" style="left:540px;top:147px;font-size:12px;color:#4e4e4e;width:6px;text-align:center">8</div>
<div style="left:552px;top:152px;width:1px;height:2px;background:#333"></div>
<div style="left:561px;top:150px;width:1px;height:6px;background:#444"></div>
<div style="left:571px;top:152px;width:1px;height:2px;background:#333"></div>
<div class="t" style="left:578px;top:147px;font-size:12px;color:#4e4e4e;width:6px;text-align:center">9</div>
<div style="left:590px;top:152px;width:1px;height:2px;background:#333"></div>
<div style="left:599px;top:150px;width:1px;height:6px;background:#444"></div>
<div class="t" style="left:612px;top:147px;font-size:12px;color:#4e4e4e;width:12px;text-align:center">10</div>
<div style="left:637px;top:150px;width:1px;height:6px;background:#444"></div>
<div class="t" style="left:650px;top:147px;font-size:12px;color:#4e4e4e;width:12px;text-align:center">11</div>
<div style="left:675px;top:150px;width:1px;height:6px;background:#444"></div>
<div class="t" style="left:688px;top:147px;font-size:12px;color:#4e4e4e;width:12px;text-align:center">12</div>
<div style="left:712px;top:150px;width:1px;height:6px;background:#444"></div>
<div class="t" style="left:726px;top:147px;font-size:12px;color:#4e4e4e;width:12px;text-align:center">13</div>
<div style="left:750px;top:150px;width:1px;height:6px;background:#444"></div>
<div class="t" style="left:764px;top:147px;font-size:12px;color:#4e4e4e;width:12px;text-align:center">14</div>
<div style="left:788px;top:150px;width:1px;height:6px;background:#444"></div>
<div class="t" style="left:802px;top:147px;font-size:12px;color:#4e4e4e;width:12px;text-align:center">15</div>
<div style="left:826px;top:150px;width:1px;height:6px;background:#444"></div>
<div class="t" style="left:839px;top:147px;font-size:12px;color:#4e4e4e;width:12px;text-align:center">16</div>
<div style="left:864px;top:150px;width:1px;height:6px;background:#444"></div>
<div style="left:902px;top:150px;width:1px;height:6px;background:#444"></div>
<div class="t" style="left:915px;top:147px;font-size:12px;color:#6b5a70;width:12px;text-align:center">18</div>
<div style="left:939px;top:150px;width:1px;height:6px;background:#444"></div>
<div style="left:287px;top:162px;width:1px;height:2px;background:#777"></div>
<div style="left:334px;top:162px;width:1px;height:2px;background:#777"></div>
<div style="left:382px;top:162px;width:1px;height:2px;background:#777"></div>
<div style="left:429px;top:162px;width:1px;height:2px;background:#777"></div>
<div style="left:476px;top:162px;width:1px;height:2px;background:#777"></div>
<div style="left:524px;top:162px;width:1px;height:2px;background:#777"></div>
<div style="left:571px;top:162px;width:1px;height:2px;background:#777"></div>
<div style="left:618px;top:162px;width:1px;height:2px;background:#777"></div>
<div style="left:665px;top:162px;width:1px;height:2px;background:#777"></div>
<div style="left:712px;top:162px;width:1px;height:2px;background:#777"></div>
<div style="left:760px;top:162px;width:1px;height:2px;background:#777"></div>
<div style="left:807px;top:162px;width:1px;height:2px;background:#777"></div>
<div style="left:854px;top:162px;width:1px;height:2px;background:#777"></div>
<svg style="left:236px;top:144px;" width="10" height="24" viewBox="0 0 10 24"><path d="M0.5 0.5H8.5V5L4.5 9L8.5 13V23.5H0.5V13L4.5 9L0.5 5Z" fill="#e9e9e9" stroke="#787878"/><path d="M0.5 17.5H8.5" stroke="#787878"/></svg>
<svg style="left:878px;top:145px;" width="10" height="17" viewBox="0 0 10 17"><path d="M4.5 0V8.5" stroke="#787878"/><path d="M4.5 8.5L8.5 12.5V16.5H0.5V12.5Z" fill="#e9e9e9" stroke="#787878"/></svg>
<div style="left:29px;top:187px;width:16px;height:438px;background:#fff"></div>
<div style="left:29px;top:187px;width:16px;height:76px;background:#c3c3c3;border-bottom:1px solid #a8a8a8"></div>
<div style="left:36px;top:197px;width:2px;height:1px;background:#333"></div>
<div style="left:34px;top:206px;width:6px;height:1px;background:#444"></div>
<div style="left:36px;top:216px;width:2px;height:1px;background:#333"></div>
<div class="t" style="left:34px;top:220px;font-size:12px;color:#6b5a70">1</div>
<div style="left:36px;top:235px;width:2px;height:1px;background:#333"></div>
<div style="left:34px;top:244px;width:6px;height:1px;background:#444"></div>
<div style="left:36px;top:254px;width:2px;height:1px;background:#333"></div>
<div style="left:36px;top:272px;width:2px;height:1px;background:#333"></div>
<div style="left:34px;top:282px;width:6px;height:1px;background:#444"></div>
<div style="left:36px;top:291px;width:2px;height:1px;background:#333"></div>
<div class="t" style="left:34px;top:296px;font-size:12px;color:#4e4e4e">1</div>
<div style="left:36px;top:310px;width:2px;height:1px;background:#333"></div>
<div style="left:34px;top:320px;width:6px;height:1px;background:#444"></div>
<div style="left:36px;top:329px;width:2px;height:1px;background:#333"></div>
<div class="t" style="left:34px;top:334px;font-size:12px;color:#4e4e4e">2</div>
<div style="left:36px;top:348px;width:2px;height:1px;background:#333"></div>
<div style="left:34px;top:358px;width:6px;height:1px;background:#444"></div>
<div style="left:36px;top:367px;width:2px;height:1px;background:#333"></div>
<div class="t" style="left:34px;top:371px;font-size:12px;color:#4e4e4e">3</div>
<div style="left:36px;top:386px;width:2px;height:1px;background:#333"></div>
<div style="left:34px;top:395px;width:6px;height:1px;background:#444"></div>
<div style="left:36px;top:405px;width:2px;height:1px;background:#333"></div>
<div class="t" style="left:34px;top:409px;font-size:12px;color:#4e4e4e">4</div>
<div style="left:36px;top:424px;width:2px;height:1px;background:#333"></div>
<div style="left:34px;top:433px;width:6px;height:1px;background:#444"></div>
<div style="left:36px;top:443px;width:2px;height:1px;background:#333"></div>
<div class="t" style="left:34px;top:447px;font-size:12px;color:#4e4e4e">5</div>
<div style="left:36px;top:461px;width:2px;height:1px;background:#333"></div>
<div style="left:34px;top:471px;width:6px;height:1px;background:#444"></div>
<div style="left:36px;top:480px;width:2px;height:1px;background:#333"></div>
<div class="t" style="left:34px;top:485px;font-size:12px;color:#4e4e4e">6</div>
<div style="left:36px;top:499px;width:2px;height:1px;background:#333"></div>
<div style="left:34px;top:509px;width:6px;height:1px;background:#444"></div>
<div style="left:36px;top:518px;width:2px;height:1px;background:#333"></div>
<div class="t" style="left:34px;top:523px;font-size:12px;color:#4e4e4e">7</div>
<div style="left:36px;top:537px;width:2px;height:1px;background:#333"></div>
<div style="left:34px;top:546px;width:6px;height:1px;background:#444"></div>
<div style="left:36px;top:556px;width:2px;height:1px;background:#333"></div>
<div class="t" style="left:34px;top:560px;font-size:12px;color:#4e4e4e">8</div>
<div style="left:36px;top:575px;width:2px;height:1px;background:#333"></div>
<div style="left:34px;top:584px;width:6px;height:1px;background:#444"></div>
<div style="left:36px;top:594px;width:2px;height:1px;background:#333"></div>
<div class="t" style="left:34px;top:598px;font-size:12px;color:#4e4e4e">9</div>
<div style="left:36px;top:613px;width:2px;height:1px;background:#333"></div>
<div style="left:34px;top:622px;width:6px;height:1px;background:#444"></div>
<div style="left:28px;top:144px;width:18px;height:18px;background:#f8f8f8;border:1px solid #c6c6c6"></div>
<svg style="left:33px;top:149px;" width="7" height="7" viewBox="0 0 7 7"><path d="M1 0V5.5H7" fill="none" stroke="#000" stroke-width="2"/></svg>
<div style="left:1069px;top:138px;width:14px;height:487px;background:#ededed"></div>
<svg style="left:1072px;top:142px;" width="8" height="6" viewBox="0 0 8 6"><path d="M0.8 5.2L4 1.8L7.2 5.2" fill="none" stroke="#333" stroke-width="1.6"/></svg>
<div style="left:1069px;top:151px;width:14px;height:161px;background:#c6c6c6"></div>
<svg style="left:1072px;top:570px;" width="9" height="6" viewBox="0 0 9 6"><path d="M0.8 0.8L4.5 4.5L8.2 0.8" fill="none" stroke="#555" stroke-width="2"/></svg>
<div style="left:1069px;top:580px;width:14px;height:15px;background:#f0f0f0;border:1px solid #d8d8d8"></div>
<div style="left:1069px;top:594px;width:14px;height:16px;background:#f0f0f0;border:1px solid #d8d8d8"></div>
<div style="left:1069px;top:609px;width:14px;height:17px;background:#f0f0f0;border:1px solid #d8d8d8"></div>
<svg style="left:1072px;top:584px;" width="8" height="7" viewBox="0 0 8 7"><path d="M4 0L7 3H1Z M4 2.5L8 6.5H0Z" fill="#000"/></svg>
<div style="left:1073px;top:599px;width:5px;height:5px;background:#e0522a;border-radius:3px"></div>
<svg style="left:1072px;top:613px;" width="8" height="7" viewBox="0 0 8 7"><path d="M4 7L7 4H1Z M4 4.5L8 0.5H0Z" fill="#000"/></svg>
<div style="left:11px;top:625px;width:1058px;height:14px;background:#eeeeee;border-left:1px solid #d6d6d6"></div>
<div style="left:22px;top:625px;width:15px;height:14px;background:#d4d4d4"></div>
<svg style="left:26px;top:628px;" width="6" height="9" viewBox="0 0 6 9"><path d="M5 0.8L1.3 4.5L5 8.2" fill="none" stroke="#8c8c8c" stroke-width="2"/></svg>
<div style="left:1055px;top:625px;width:14px;height:14px;background:#d4d4d4"></div>
<svg style="left:1059px;top:628px;" width="6" height="9" viewBox="0 0 6 9"><path d="M1 0.8L4.7 4.5L1 8.2" fill="none" stroke="#8c8c8c" stroke-width="2"/></svg>
<div style="left:1069px;top:625px;width:14px;height:14px;background:#efefef;border-left:1px solid #d8d8d8"></div>
<div style="left:1083px;top:138px;width:253px;height:501px;background:#efefef;border-left:1px solid #d8d8d8;border-right:1px solid #d9d9d9"></div>
<svg style="left:1102px;top:145px;" width="17" height="17" viewBox="0 0 17 17"><path d="M6.4 1H3.2a3 3 0 0 0 0 6H5V12.5H6.4Z M7.7 1H9.2V12.5H7.7Z M6 1H8V2.2H6Z" fill="#6a6a6a"/><path d="M15.2 6L12 10" stroke="#c4c4c4" stroke-width="2.2"/><path d="M12 10L4.5 15.5" stroke="#70bdf5" stroke-width="2.2"/></svg>
<div style="left:1121px;top:141px;width:24px;height:24px;background:#fff;border:1px solid #3b8de0"></div>
<svg style="left:1125px;top:145px;" width="20" height="18" viewBox="0 0 20 18"><path d="M1.3 13L5.5 1.5H6.5L10.7 13" fill="none" stroke="#6a6a6a" stroke-width="2.1"/><path d="M3.2 8.6H8.8" stroke="#6a6a6a" stroke-width="1.6"/><path d="M16.5 6L13 10.3" stroke="#c4c4c4" stroke-width="2.2"/><path d="M13 10.3L6.5 15.8" stroke="#70bdf5" stroke-width="2.2"/></svg>
<div style="left:1085px;top:368px;width:7px;height:40px;background:#fdfdfd;border:1px solid #999;border-radius:3px"></div>
<svg style="left:1087px;top:384px;" width="3" height="5" viewBox="0 0 3 5"><path d="M0 0L3 2.5L0 5Z" fill="#999"/></svg>
<svg style="left:1321px;top:150px;" width="8" height="5" viewBox="0 0 8 5"><path d="M0 0H8L4 5Z" fill="#111"/></svg>
<div style="left:1096px;top:173px;width:235px;height:1px;background:#dcdcdc"></div>
<div class="t" style="left:1097px;top:186px;font-size:12px;color:#1a1a1a">Zeichenvorlagen:</div>
<div style="left:1096px;top:204px;width:236px;height:290px;background:#fff;border:1px solid #d6d6d6"></div>
<div style="left:1116px;top:208px;width:195px;height:34px;background:#98b3d3"></div>
<div style="left:1101px;top:218px;width:14px;height:14px;background:#fff;border:1px solid #8a8a8a"></div>
<div class="t" style="left:1120px;top:219px;font-family:'Liberation Serif',serif;font-size:13.5px;color:#111;letter-spacing:-0.3px">Normal</div>
<div style="left:1312px;top:208px;width:17px;height:34px;background:#f5f5f5;border:1px solid #9a9a9a"></div>
<svg style="left:1317px;top:223px;" width="8" height="5" viewBox="0 0 8 5"><path d="M0 0H8L4 5Z" fill="#111"/></svg>
<div style="left:1096px;top:500px;width:72px;height:25px;background:#ebebeb;border:1px solid #adadad"></div>
<div class="t" style="left:1104px;top:507px;font-size:12px;color:#1a1a1a">Anwenden</div>
<div style="left:1174px;top:500px;width:80px;height:25px;background:#ebebeb;border:1px solid #adadad"></div>
<div class="t" style="left:1182px;top:507px;font-size:12px;color:#1a1a1a">Bearbeiten...</div>
<div style="left:1248px;top:531px;width:83px;height:25px;background:#ebebeb;border:1px solid #adadad"></div>
<div class="t" style="left:1258px;top:538px;font-size:12px;color:#1a1a1a">Verwalten</div>
<svg style="left:1317px;top:541px;" width="8" height="5" viewBox="0 0 8 5"><path d="M0 0H8L4 5Z" fill="#111"/></svg>
<div style="left:1096px;top:565px;width:13px;height:13px;background:#fff;border:1px solid #333"></div>
<svg style="left:1098px;top:567px;" width="9" height="9" viewBox="0 0 9 9"><path d="M1 4.5L3.5 7.5L8 1" fill="none" stroke="#111" stroke-width="1.6"/></svg>
<div class="t" style="left:1116px;top:566px;font-size:12px;color:#1a1a1a">Hierarchisch anzeigen</div>
<div style="left:1096px;top:589px;width:13px;height:13px;background:#fff;border:1px solid #333"></div>
<svg style="left:1098px;top:591px;" width="9" height="9" viewBox="0 0 9 9"><path d="M1 4.5L3.5 7.5L8 1" fill="none" stroke="#111" stroke-width="1.6"/></svg>
<div class="t" style="left:1116px;top:590px;font-size:12px;color:#1a1a1a">Vorschau</div>
<div class="t" style="left:1097px;top:616px;font-size:12px;color:#1a1a1a">Anzeigen:</div>
<div style="left:1156px;top:610px;width:176px;height:24px;background:#fff;border:1px solid #a7b6cc"></div>
<div class="t" style="left:1161px;top:616px;font-size:12px;color:#1a1a1a">Benutzte Vorlagen</div>
<svg style="left:1315px;top:619px;" width="8" height="6" viewBox="0 0 8 6"><path d="M0.8 0.8L4 4.2L7.2 0.8" fill="none" stroke="#444" stroke-width="1.8"/></svg>
<div style="left:11px;top:639px;width:1325px;height:29px;background:#efefef;border-top:1px solid #c0c0c0;border-bottom:1px solid #d8d8d8;border-left:1px solid #d6d6d6"></div>
<div style="left:12px;top:640px;width:1324px;height:1px;background:#f6f6f6"></div>
<div style="left:244px;top:644px;width:1px;height:17px;background:#c4c4c4"></div>
<div style="left:346px;top:644px;width:1px;height:17px;background:#c4c4c4"></div>
<div style="left:423px;top:644px;width:1px;height:17px;background:#c4c4c4"></div>
<div style="left:495px;top:644px;width:1px;height:17px;background:#c4c4c4"></div>
<div style="left:612px;top:644px;width:1px;height:17px;background:#c4c4c4"></div>
<div style="left:759px;top:644px;width:1px;height:17px;background:#c4c4c4"></div>
<div style="left:896px;top:644px;width:1px;height:17px;background:#c4c4c4"></div>
<div style="left:963px;top:644px;width:1px;height:17px;background:#c4c4c4"></div>
<div class="t" style="left:251px;top:645px;font-size:13px;color:#1a1a1a;transform:scaleX(0.8160);transform-origin:0 0">Ze 1 Sp 1</div>
<div class="t" style="left:352px;top:645px;font-size:13px;color:#1a1a1a;transform:scaleX(0.8565);transform-origin:0 0">Bereich 1</div>
<div class="t" style="left:429px;top:645px;font-size:13px;color:#1a1a1a;transform:scaleX(0.8691);transform-origin:0 0">Kapitel 1</div>
<div class="t" style="left:501px;top:645px;font-size:13px;color:#1a1a1a;transform:scaleX(0.8699);transform-origin:0 0">Seite 1 von 1</div>
<div class="t" style="left:619px;top:645px;font-size:13px;color:#1a1a1a;transform:scaleX(0.9036);transform-origin:0 0">Deutsch (Deutschland)</div>
<div class="t" style="left:765px;top:645px;font-size:13px;color:#1a1a1a;transform:scaleX(0.9023);transform-origin:0 0">0 Wörter</div>
<div class="t" style="left:973px;top:645px;font-size:13px;color:#1a1a1a;transform:scaleX(0.8101);transform-origin:0 0">EINF</div>
<div style="left:1009px;top:641px;width:24px;height:24px;background:#fafafa;border:1px solid #4a90e2"></div>
<svg style="left:1013px;top:645px;" width="16" height="16" viewBox="0 0 16 16"><rect x="0.5" y="0.5" width="15" height="15" fill="#fff" stroke="#6b6b6b"/><path d="M3 3.5h10M3 5.5h10M3 7.5h10M3 9.5h10M3 11.5h10M3 13.5h10" stroke="#a6aeae"/></svg>
<svg style="left:1040px;top:647px;" width="12" height="12" viewBox="0 0 12 12"><path d="M0 1.5h12M0 3.5h12M0 5.5h12M0 7.5h12M0 9.5h12M0 11.5h12" stroke="#6e6e6e"/></svg>
<svg style="left:1063px;top:645px;" width="16" height="16" viewBox="0 0 16 16"><rect x="0.5" y="0.5" width="15" height="15" fill="#fff" stroke="#6b6b6b"/><path d="M3 3.5h10M3 12.5h10" stroke="#a6aeae"/></svg>
<svg style="left:1088px;top:647px;" width="14" height="12" viewBox="0 0 14 12"><path d="M2 1.5h8M4 3.5h7M6 5.5h6M2 7.5h7M4 9.5h8M4 11.5h8" stroke="#6e6e6e"/><path d="M0 1h1v1h-1zM2 3h1v1h-1zM4 5h1v1h-1zM0 7h1v1h-1zM2 9h1v1h-1zM2 11h1v1h-1z" fill="#555"/></svg>
<div style="left:1117px;top:652px;width:7px;height:1px;background:#666"></div>
<div style="left:1131px;top:652px;width:110px;height:1px;background:#cfcfcf"></div>
<svg style="left:1180px;top:647px;" width="10" height="10" viewBox="0 0 10 10"><circle cx="5" cy="5" r="4.3" fill="#fafafa" stroke="#777" stroke-width="1.1"/></svg>
<svg style="left:1247px;top:648px;" width="8" height="8" viewBox="0 0 8 8"><path d="M4 0V8M0 4H8" stroke="#666"/></svg>
<div class="t" style="left:1272px;top:645px;font-size:13px;color:#1a1a1a;transform:scaleX(0.8271);transform-origin:0 0">100%</div>
<svg style="left:1309px;top:646px;" width="8" height="6" viewBox="0 0 8 6"><path d="M0.6 0.6L3 2.8L0.6 5M4.2 0.6L6.6 2.8L4.2 5" fill="none" stroke="#6b6b78" stroke-width="1.3"/></svg></body></html>
